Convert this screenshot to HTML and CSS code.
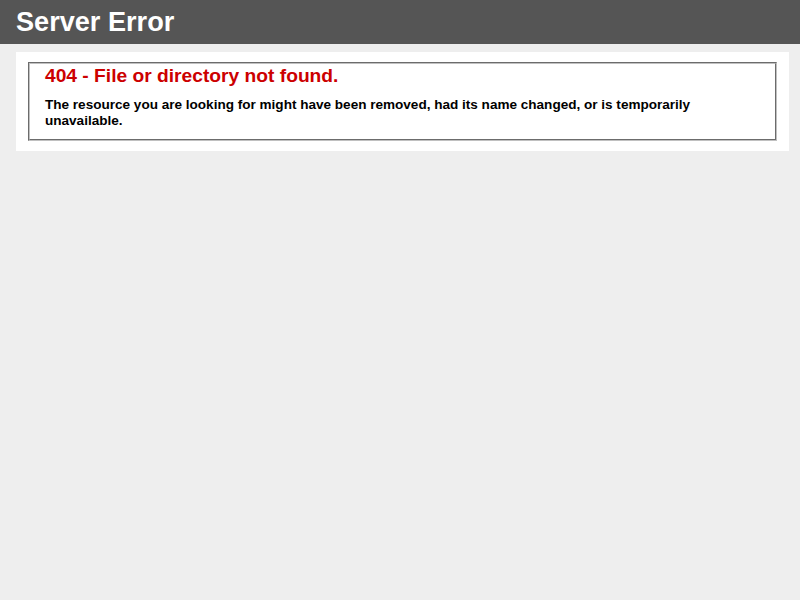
FILE: index.html
```html
<!DOCTYPE html>
<html lang="en">
<head>
    <meta charset="UTF-8">
    <title>404 - File or directory not found.</title>
    <link rel="stylesheet" href="styles.css">
</head>
<body>
    <div id="header"><h1>Server Error</h1></div>
    <div id="content">
        <div class="content-container">
            <fieldset>
                <h2>404 - File or directory not found.</h2>
                <h3>The resource you are looking for might have been removed, had its name changed, or is temporarily unavailable.</h3>
            </fieldset>
        </div>
    </div>
</body>
</html>
```

FILE: styles.css
```css
body {
    margin: 0;
    font-size: 11.3px;
    font-family: "Liberation Sans", Arial, Helvetica, sans-serif;
    background: #EEEEEE;
}

fieldset {
    padding: 0 15px 10px 15px;
    margin: 0 2px;
    border: 2px groove #c0c0c0;
}

h1 {
    font-size: 2.4em;
    line-height: 32px;
    margin: 0;
    color: #FFF;
}

h2 {
    font-size: 1.7em;
    line-height: 24px;
    margin: 0;
    color: #CC0000;
}

h3 {
    font-size: 1.2em;
    line-height: 16px;
    margin: 9px 0 0 0;
    color: #000000;
}

#header {
    width: 96%;
    margin: 0;
    padding: 6px 2% 6px 2%;
    font-family: "Liberation Sans", Verdana, sans-serif;
    color: #FFF;
    background-color: #555555;
}

#content {
    margin: 0 0 0 2%;
}

.content-container {
    background: #FFF;
    width: 96%;
    margin-top: 8px;
    padding: 10px;
}
```
